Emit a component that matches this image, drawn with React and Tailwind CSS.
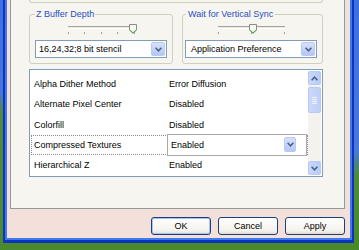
import React from "react";

const Chevron = ({ up = false }) => (
  <svg width="7" height="5" viewBox="0 0 7 5" className="block">
    <path
      d={up ? "M0.6 4.2 L3.5 1.2 L6.4 4.2" : "M0.6 0.8 L3.5 3.8 L6.4 0.8"}
      fill="none"
      stroke="#4d6185"
      strokeWidth="1.6"
    />
  </svg>
);

function DropBtn({ className }) {
  return (
    <div
      className={
        "flex items-center justify-center rounded-[2px] border border-[#b7c9f4] bg-[linear-gradient(180deg,#d6e1fb,#b3c7f5)] " +
        className
      }
    >
      <Chevron />
    </div>
  );
}

function Thumb({ className }) {
  return (
    <svg width="8" height="10" viewBox="0 0 8 10" className={"absolute top-[-2px] " + className}>
      <path d="M0.5 0.5 H7.5 V6 L4 9.5 L0.5 6 Z" fill="#f6f6f3" stroke="#8a8f86" strokeWidth="1" />
      <path d="M1.2 6.2 L4 8.8 L6.8 6.2" fill="none" stroke="#3fae3a" strokeWidth="1" />
    </svg>
  );
}

function Slider({ ticks, thumbClass }) {
  return (
    <div className="relative mx-auto mt-[7px] h-[8px] w-[67px]">
      <div className="h-[3px] border-t border-b border-t-[#a4a4a0] border-b-white bg-[#e9e8e3]" />
      <div className="mt-[3px] flex justify-between">
        {Array.from({ length: ticks }).map((_, i) => (
          <div key={i} className="h-[2px] w-px bg-[#9c9c9c]" />
        ))}
      </div>
      <Thumb className={thumbClass} />
    </div>
  );
}

const rows = [
  ["Alpha Dither Method", "Error Diffusion"],
  ["Alternate Pixel Center", "Disabled"],
  ["Colorfill", "Disabled"],
  ["Compressed Textures", "Enabled", true],
  ["Hierarchical Z", "Enabled"],
];

function XPButton({ children, def }) {
  return (
    <div
      className={
        "flex h-[18px] w-[60px] items-center justify-center rounded-[3px] border border-[#1c3f7a] bg-[linear-gradient(180deg,#ffffff,#f4f2ec_80%,#dedbd0)] " +
        (def ? "shadow-[inset_0_0_0_1px_#a9c4f4]" : "")
      }
    >
      {children}
    </div>
  );
}

export default function App() {
  return (
    <div className="flex h-[250px] w-[359px] flex-col overflow-hidden bg-[#4a8a2c] font-['Liberation_Sans',Arial,sans-serif] text-[9px] leading-[10px] text-black">
      <div className="flex h-[243px]">
        <div className="w-[3px] bg-[linear-gradient(180deg,#3e6fdf_0%,#4676d8_38%,#4f8a3a_46%,#4a8a2c_100%)]" />
        <div className="flex flex-1 flex-col bg-[#0b33c4] px-[2px] pb-[3px]">
          <div className="flex flex-1 flex-col border-x-[2px] border-b-[2px] border-[#3f7ae8]">
            <div className="flex flex-1 flex-col bg-[#f4e0da] pl-[3px] pr-[5px]">
              {/* tab page */}
              <div className="flex h-[209px] flex-col border-x border-b border-[#919b9c] bg-[#f7f5f0] pl-[18px]">
                <div className="h-[3px] w-[294px] rounded-b-[3px] border-x border-b border-[#d0d0bf]" />
                <div className="mt-[6px] flex gap-[9px]">
                  <fieldset className="w-[144px] rounded-[3px] border border-[#d0d0bf] px-[5px] pb-[5px]">
                    <legend className="px-[1px] leading-[10px] text-[#1f4fc4]">Z Buffer Depth</legend>
                    <Slider ticks={5} thumbClass="left-[61px]" />
                    <div className="mt-[6px] flex h-[18px] items-stretch border border-[#7f9db9] bg-white p-[1px]">
                      <div className="flex flex-1 items-center pl-[2px]">16,24,32;8 bit stencil</div>
                      <DropBtn className="w-[14px]" />
                    </div>
                  </fieldset>
                  <fieldset className="w-[141px] rounded-[3px] border border-[#d0d0bf] pl-[2px] pr-[5px] pb-[5px]">
                    <legend className="ml-[1px] px-[2px] leading-[10px] text-[#1f4fc4]">Wait for Vertical Sync</legend>
                    <Slider ticks={3} thumbClass="left-[31px]" />
                    <div className="mt-[6px] flex h-[18px] items-stretch border border-[#7f9db9] bg-white p-[1px]">
                      <div className="flex flex-1 items-center pl-[4px]">Application Preference</div>
                      <DropBtn className="w-[14px]" />
                    </div>
                  </fieldset>
                </div>
                {/* list */}
                <div className="mt-[5px] flex h-[108px] w-[294px] border border-[#7f9db9] bg-white p-[1px]">
                  <div className="flex flex-1 flex-col pt-[3px]">
                    {rows.map(([a, b, sel]) => (
                      <div
                        key={a}
                        className={
                          "flex h-[20.5px] items-stretch border border-dotted " +
                          (sel ? "border-[#8c8c8c]" : "border-transparent")
                        }
                      >
                        <div className="flex w-[135px] items-center pl-[2px]">{a}</div>
                        {sel ? (
                          <div className="-my-[2px] flex flex-1 items-center border border-[#a9a9a9] bg-white pl-[3px] pr-[10px]">
                            <div className="flex-1">{b}</div>
                            <DropBtn className="h-[15px] w-[12px]" />
                          </div>
                        ) : (
                          <div className="flex flex-1 items-center pl-[2px]">{b}</div>
                        )}
                      </div>
                    ))}
                  </div>
                  {/* scrollbar */}
                  <div className="flex w-[13px] flex-col bg-[#f3f2ec]">
                    <div className="flex h-[14px] items-center justify-center rounded-[2px] border border-[#b7c9f4] bg-[linear-gradient(90deg,#c9d8fb,#b8cbf6)]">
                      <Chevron up />
                    </div>
                    <div className="mt-[2px] flex h-[26px] flex-col items-center justify-center gap-[1px] rounded-[2px] border border-[#b7c9f4] bg-[linear-gradient(90deg,#cbd9fb,#bccff7)]">
                      <div className="h-px w-[5px] bg-[#eef3fe]" />
                      <div className="h-px w-[5px] bg-[#eef3fe]" />
                      <div className="h-px w-[5px] bg-[#eef3fe]" />
                      <div className="h-px w-[5px] bg-[#eef3fe]" />
                    </div>
                    <div className="flex-1" />
                    <div className="flex h-[14px] items-center justify-center rounded-[2px] border border-[#b7c9f4] bg-[linear-gradient(90deg,#c9d8fb,#b8cbf6)]">
                      <Chevron />
                    </div>
                  </div>
                </div>
              </div>
              {/* buttons */}
              <div className="mt-[8px] flex justify-end gap-[7px]">
                <XPButton def>OK</XPButton>
                <XPButton>Cancel</XPButton>
                <XPButton>Apply</XPButton>
              </div>
            </div>
          </div>
        </div>
        <div className="w-[5px] bg-[linear-gradient(180deg,#3e6fdf_0%,#4b78d6_62%,#4f8a3a_72%,#4a8a2c_100%)]" />
      </div>
      <div className="h-[7px] bg-[#4a8a2c]" />
    </div>
  );
}
